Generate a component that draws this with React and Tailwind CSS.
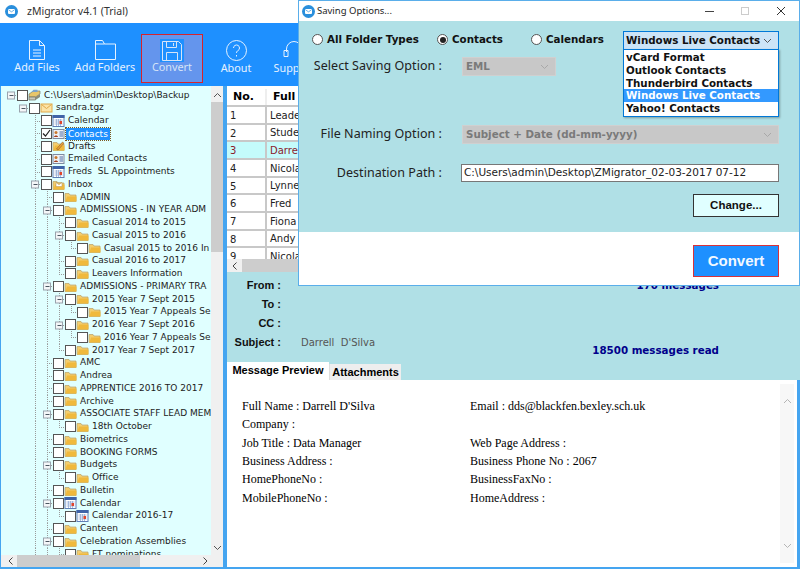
import React from "react"

const treeRows = [
  [0, "C:\\Users\\admin\\Desktop\\Backup", "drive", true],
  [1, "sandra.tgz", "mail", true],
  [2, "Calendar", "cal"],
  [2, "Contacts", "card"],
  [2, "Drafts", "draft"],
  [2, "Emailed Contacts", "card"],
  [2, "Freds  SL Appointments", "cal"],
  [2, "Inbox", "inbox", true],
  [3, "ADMIN", "folder"],
  [3, "ADMISSIONS - IN YEAR ADM", "folder", true],
  [4, "Casual 2014 to 2015", "folder"],
  [4, "Casual 2015 to 2016", "folder", true],
  [5, "Casual 2015 to 2016 In", "folder"],
  [4, "Casual 2016 to 2017", "folder"],
  [4, "Leavers Information", "folder"],
  [3, "ADMISSIONS - PRIMARY TRA", "folder", true],
  [4, "2015 Year 7 Sept 2015", "folder", true],
  [5, "2015 Year 7 Appeals Se", "folder"],
  [4, "2016 Year 7 Sept 2016", "folder", true],
  [5, "2016 Year 7 Appeals Se", "folder"],
  [4, "2017 Year 7 Sept 2017", "folder"],
  [3, "AMC", "folder"],
  [3, "Andrea", "folder"],
  [3, "APPRENTICE 2016 TO 2017", "folder"],
  [3, "Archive", "folder"],
  [3, "ASSOCIATE STAFF LEAD MEM", "folder", true],
  [4, "18th October", "folder"],
  [3, "Biometrics", "folder"],
  [3, "BOOKING FORMS", "folder"],
  [3, "Budgets", "folder", true],
  [4, "Office", "folder"],
  [3, "Bulletin", "folder"],
  [3, "Calendar", "cal", true],
  [4, "Calendar 2016-17", "cal"],
  [3, "Canteen", "folder"],
  [3, "Celebration Assemblies", "folder", true],
  [4, "FT nominations", "folder"],
]

const gridRows = ["Leade", "Stude", "Darre", "Nicola", "Lynne", "Fred", "Fiona", "Andy", "Nicola"]

const previewRows = [
  ["Full Name : Darrell D'Silva", "Email : dds@blackfen.bexley.sch.uk"],
  ["Company :", ""],
  ["Job Title : Data Manager", "Web Page Address :"],
  ["Business Address :", "Business Phone No : 2067"],
  ["HomePhoneNo :", "BusinessFaxNo :"],
  ["MobilePhoneNo :", "HomeAddress :"],
]

// does the line of this level carry on below row i
function lineContinues(i, level) {
  for (let j = i + 1; j < treeRows.length; j++) {
    if (treeRows[j][0] === level) return true
    if (treeRows[j][0] < level) return false
  }
  return level <= 3
}

function TreeLines({ index, depth, open }) {
  const width = 16 + 12 * depth
  const lines = []
  for (let level = 2; level < depth; level++) {
    if (lineContinues(index, level)) lines.push(10 + 12 * level)
  }
  const own = 10 + 12 * depth
  return (
    <svg width={width} height="12.75" viewBox={`0 0 ${width} 12.75`} className="shrink-0">
      {lines.map((x) => (
        <line key={x} x1={x + 0.5} x2={x + 0.5} y1="0" y2="12.75" stroke="#9a9a9a" strokeDasharray="1 1" />
      ))}
      {depth >= 2 && (
        <line x1={own + 0.5} x2={own + 0.5} y1="0" y2={lineContinues(index, depth) ? 12.75 : 6.5} stroke="#9a9a9a" strokeDasharray="1 1" />
      )}
      <line x1={own} x2={width} y1="6.5" y2="6.5" stroke="#9a9a9a" strokeDasharray="1 1" />
      {open && (
        <g>
          <rect x={own - 3.5} y="3" width="7" height="7" fill="#f4f6f8" stroke="#9aa3ad" />
          <line x1={own - 1.5} x2={own + 2.5} y1="6.5" y2="6.5" stroke="#4a5560" />
        </g>
      )}
    </svg>
  )
}

function TreeIcon({ type }) {
  if (type === "cal") {
    return (
      <svg width="13" height="12" viewBox="0 0 12 12" className="shrink-0">
        <rect x="0.5" y="0.5" width="11" height="11" fill="#fff" stroke="#5f7fb5" />
        <rect x="0" y="0" width="12" height="3" fill="#3f63a8" />
        <path d="M2 5h8M2 7h8M2 9h8M4 4v7M6 4v7M8 4v7" stroke="#8aa3d0" strokeWidth="0.7" />
        <rect x="7" y="6" width="2.5" height="3" fill="#e0452c" />
      </svg>
    )
  }
  if (type === "card") {
    return (
      <svg width="13" height="12" viewBox="0 0 12 12" className="shrink-0">
        <rect x="0.5" y="1.5" width="11" height="9" fill="#eef1f6" stroke="#7e8aa0" />
        <circle cx="3.5" cy="4.5" r="1.5" fill="#c9772c" />
        <path d="M1.5 9c0-2 4-2 4 0z" fill="#a33d1c" />
        <path d="M7 4h3.5M7 6h3.5M7 8h3.5" stroke="#4f6fa8" />
      </svg>
    )
  }
  if (type === "mail") {
    return (
      <svg width="13" height="12" viewBox="0 0 12 12" className="shrink-0">
        <rect x="0.5" y="2" width="11" height="8" fill="#fbe3a6" stroke="#e0a94a" />
        <path d="M1 2.5l5 4 5-4" fill="none" stroke="#e0a94a" />
      </svg>
    )
  }
  if (type === "drive") {
    return (
      <svg width="13" height="12" viewBox="0 0 12 12" className="shrink-0">
        <path d="M0.5 8V5L5 2h6.5v3L7 8z" fill="#e8c66a" stroke="#7c7c6a" strokeWidth="0.7" />
        <path d="M0.5 8h6.5v3H0.5z" fill="#c8c8bc" stroke="#6a6a5c" strokeWidth="0.7" />
        <path d="M7 8l4.5-3v3L7 11z" fill="#8c8c78" />
        <path d="M3 3h6V0.8H5z" fill="#7aa3cc" />
      </svg>
    )
  }
  return (
    <svg width="13" height="12" viewBox="0 0 12 12" className="shrink-0">
      <path d="M0.5 10.5V2.5h4l1 1.5h6v6.5z" fill="#f3cd6e" stroke="#b8a06a" strokeWidth="0.7" />
      <path d="M1 10.5l1.5-5h9.5v5z" fill="#f0b93c" />
      {type === "draft" && <path d="M4 9l6-7 1.5 1.2L5.5 10z" fill="#e9a23b" stroke="#7c4d20" strokeWidth="0.5" />}
      {type === "inbox" && <path d="M3.5 3.5h6v4h-6zM3.5 3.5l3 2.2 3-2.2" fill="#fff" stroke="#c0a060" strokeWidth="0.6" />}
    </svg>
  )
}

function Checkbox({ checked }) {
  return (
    <span className="flex h-[11px] w-[11px] shrink-0 items-center justify-center border border-[#555] bg-white">
      {checked && (
        <svg width="9" height="9" viewBox="0 0 9 9">
          <path d="M1 4.5l2.5 2.5L8 1" fill="none" stroke="#222" strokeWidth="1.2" />
        </svg>
      )}
    </span>
  )
}

function TreeRow({ row, index }) {
  const [depth, label, icon, open] = row
  const selected = label === "Contacts"
  return (
    <div className="flex h-[12.75px] items-center whitespace-pre">
      <TreeLines index={index} depth={depth} open={open} />
      <Checkbox checked={selected} />
      <TreeIcon type={icon} />
      <span className={selected ? "ml-px bg-[#1e90ff] px-[2px] leading-[12px] text-white outline-1 outline-dotted outline-[#7a5a20]" : "ml-[3px] text-[#222]"}>
        {label}
      </span>
    </div>
  )
}

function ToolButton({ label, children, active }) {
  return (
    <div className={active ? "flex h-[49px] w-[62px] flex-col items-center border border-[#d8232a] bg-[#6495ed] pt-[4px] text-[#d6e4f7]" : "flex h-[49px] flex-col items-center pt-[6px] text-[#e6f2ff]"}>
      {children}
      <span className={active ? "-mt-[2px] text-[10.8px] leading-[14px] whitespace-nowrap" : "text-[10.8px] leading-[14px] whitespace-nowrap"}>{label}</span>
    </div>
  )
}

function AppIcon() {
  return (
    <svg width="13" height="13" viewBox="0 0 13 13" className="shrink-0">
      <circle cx="6.5" cy="6.5" r="6.5" fill="#2a8fdc" />
      <rect x="3" y="4" width="7" height="5" rx="1" fill="#fff" />
      <path d="M3.5 4.8l3 2 3-2" fill="none" stroke="#2a8fdc" strokeWidth="0.7" />
    </svg>
  )
}

function Chevron({ color }) {
  return (
    <svg width="9" height="6" viewBox="0 0 9 6" className="shrink-0">
      <path d="M1 1l3.5 3.5L8 1" fill="none" stroke={color} />
    </svg>
  )
}

function Radio({ checked, label, width }) {
  return (
    <label className={width + " -mt-[2px] flex items-center gap-[4px] font-bold"}>
      <span className="flex h-[11px] w-[11px] items-center justify-center rounded-full border border-[#555] bg-white">
        {checked && <span className="h-[6px] w-[6px] rounded-full bg-[#222]" />}
      </span>
      {label}
    </label>
  )
}

function FormRow({ label, className, children }) {
  return (
    <div className={"flex items-center " + className}>
      <span className="w-[143px] whitespace-nowrap text-right font-['Noto_Sans',sans-serif] text-[12.5px] tracking-[0.05px] text-[#222]">{label}</span>
      <div className="ml-[20px] flex min-w-0 flex-1">{children}</div>
    </div>
  )
}

function SavingDialog() {
  return (
    <div className="absolute top-0 left-[298px] flex h-[286px] w-[502px] flex-col border border-[#5aaeea] bg-white">
      <div className="flex h-[20px] items-center pl-[3px] font-['Noto_Sans',sans-serif] text-[9.5px] text-[#222]">
        <AppIcon />
        <span className="ml-[2px]">Saving Options...</span>
        <div className="ml-auto flex items-center gap-[27px] pr-[13px]">
          <span className="h-px w-[9px] bg-[#444]" />
          <span className="h-[8px] w-[8px] border border-[#ccc]" />
          <svg width="10" height="10" viewBox="0 0 10 10"><path d="M1 1l8 8M9 1l-8 8" stroke="#333" /></svg>
        </div>
      </div>

      <div className="relative flex h-[211px] flex-col bg-[#b0e0e6] pt-[10px] pr-[20px] font-['DejaVu_Sans',sans-serif] text-[10.3px] text-[#111]">
        <div className="flex h-[19px] items-center pl-[13px]">
          <Radio label="All Folder Types" width="w-[125px]" />
          <Radio checked label="Contacts" width="w-[94px]" />
          <Radio label="Calendars" width="w-[92px]" />
          <div className="flex h-[19px] w-[156px] items-center justify-between border border-[#0078d7] bg-[#cce4f7] pr-[6px] pl-[2px] font-bold whitespace-nowrap">
            Windows Live Contacts
            <Chevron color="#555" />
          </div>
        </div>
        <div className="absolute top-[28px] left-[324px] z-10 flex w-[156px] flex-col border border-[#0078d7] bg-white py-px font-bold shadow-[1px_1px_2px_rgba(0,0,0,0.3)]">
          <span className="h-[12.75px] pl-[2px] leading-[12.75px]">vCard Format</span>
          <span className="h-[12.75px] pl-[2px] leading-[12.75px]">Outlook Contacts</span>
          <span className="h-[12.75px] pl-[2px] leading-[12.75px]">Thunderbird Contacts</span>
          <span className="h-[12.75px] bg-[#3399ff] pl-[2px] leading-[12.75px] text-white">Windows Live Contacts</span>
          <span className="h-[12.75px] pl-[2px] leading-[12.75px]">Yahoo! Contacts</span>
        </div>

        <FormRow label="Select Saving Option :" className="mt-[7px] h-[19px]">
          <div className="flex h-[19px] w-[94px] items-center justify-between border border-[#d0d0d0] bg-[#c8c8c8] pr-[6px] pl-[3px] font-bold text-[#7a7a7a]">
            EML
            <Chevron color="#a8a8a8" />
          </div>
        </FormRow>
        <FormRow label="File Naming Option :" className="mt-[49px] h-[19px]">
          <div className="flex h-[19px] flex-1 items-center justify-between border border-[#d0d0d0] bg-[#c8c8c8] pr-[6px] pl-[3px] font-bold text-[#7a7a7a]">
            Subject + Date (dd-mm-yyyy)
            <Chevron color="#a8a8a8" />
          </div>
        </FormRow>
        <FormRow label="Destination Path :" className="mt-[20px] h-[18px]">
          <div className="-ml-px flex h-[18px] flex-1 items-center border border-[#777] bg-white pl-[2px] text-[10.5px] whitespace-nowrap text-[#222]">
            C:\Users\admin\Desktop\ZMigrator_02-03-2017 07-12
          </div>
        </FormRow>
        <div className="mt-[12px] flex justify-end">
          <button className="h-[23px] w-[86px] border border-[#333] bg-[#e0ffff] font-['Liberation_Sans',sans-serif] text-[11.5px] font-bold text-[#111]">Change...</button>
        </div>
      </div>

      <div className="flex flex-1 justify-end bg-white pt-[13px] pr-[20px]">
        <button className="h-[32px] w-[86px] border border-[#d8323a] bg-[#1e90ff] font-['Liberation_Sans',sans-serif] text-[15px] font-bold text-[#f2f8ff]">Convert</button>
      </div>
    </div>
  )
}

export default function App() {
  return (
    <div className="relative flex h-[569px] w-[800px] flex-col overflow-hidden bg-[#45a5f0] font-['DejaVu_Sans',sans-serif]">
      <div className="flex h-[23px] items-center bg-white pl-[5px] font-['Noto_Sans',sans-serif] text-[10.5px] text-[#333]">
        <AppIcon />
        <span className="ml-[9px]">zMigrator v4.1 (Trial)</span>
      </div>

      <div className="flex h-[63px] items-start bg-[#1e90ff] pt-[11px] font-['Noto_Sans',sans-serif]">
        <div className="ml-[14px] flex w-[46px] justify-center">
          <ToolButton label="Add Files">
            <svg width="18" height="20" viewBox="0 0 18 20" fill="none" stroke="currentColor" className="shrink-0">
              <path d="M1.5.5h10l5 5v14h-15zM11.5.5v5h5M5 10h8M5 13h8M5 16h8" />
            </svg>
          </ToolButton>
        </div>
        <div className="ml-[15px] flex w-[60px] justify-center">
          <ToolButton label="Add Folders">
            <svg width="22" height="20" viewBox="0 0 22 20" fill="none" stroke="currentColor" className="shrink-0">
              <path d="M1.5 19.5V.5h7l2 3.5h11v15.5zM1.5 4h9" />
            </svg>
          </ToolButton>
        </div>
        <div className="ml-[6px]">
          <ToolButton label="Convert" active>
            <span className="flex h-[23px] w-[24px] shrink-0 items-center justify-center bg-[#1e90ff]">
              <svg width="20" height="20" viewBox="0 0 20 20" fill="none" stroke="currentColor">
                <path d="M.5.5h16l3 3v16H.5zM4.5.5v6h10v-6M4.5 19.5v-8h11v8M11.5 2v3" />
              </svg>
            </span>
          </ToolButton>
        </div>
        <div className="ml-[18px] flex w-[30px] justify-center">
          <ToolButton label="About">
            <svg width="21" height="21" viewBox="0 0 21 21" fill="none" stroke="currentColor" className="shrink-0">
              <circle cx="10.5" cy="10.5" r="10" />
              <path d="M7.5 8a3 3 0 1 1 4.5 2.6c-1 .6-1.5 1.1-1.5 2.4M10.5 15v1.5" />
            </svg>
          </ToolButton>
        </div>
        <div className="ml-[28px] w-[30px]">
          <ToolButton label="Support">
            <svg width="22" height="21" viewBox="0 0 22 21" fill="none" stroke="currentColor" className="shrink-0">
              <path d="M3.5 12V9a7.5 7.5 0 0 1 15 0v3M1 10.5h4v6H1zM17 10.5h4v6h-4z" />
            </svg>
          </ToolButton>
        </div>
      </div>

      <div className="flex min-h-0 flex-1 pb-[2px]">
        <div className="ml-px flex w-[222px] shrink-0 flex-col bg-[#f0f0f0]">
          <div className="flex min-h-0 flex-1">
            <div className="flex-1 overflow-hidden bg-[#e0ffff] pt-[3px] text-[9px] tracking-[0.02px]">
              {treeRows.map((row, i) => (
                <TreeRow key={i} row={row} index={i} />
              ))}
            </div>
            <div className="flex w-[12px] shrink-0 flex-col items-center bg-[#f0f0f0]">
              <span className="mt-[6px] rotate-180"><Chevron color="#555" /></span>
              <div className="mt-[4px] h-[150px] w-full bg-[#cdcdcd]" />
              <span className="mt-auto mb-[4px]"><Chevron color="#555" /></span>
            </div>
          </div>
          <div className="flex h-[12px] shrink-0 items-center bg-[#f0f0f0]">
            <span className="ml-[5px] rotate-90"><Chevron color="#444" /></span>
            <div className="ml-[2px] h-full w-[123px] bg-[#cdcdcd]" />
            <span className="ml-[61px] -rotate-90"><Chevron color="#444" /></span>
          </div>
        </div>

        <div className="ml-[4px] flex min-w-0 flex-1 flex-col">
          <div className="flex h-[186px] shrink-0 flex-col bg-white">
            <div className="min-h-0 flex-1 overflow-hidden pt-[3px] font-['DejaVu_Sans',sans-serif] text-[10px] text-[#222]">
              <div className="flex h-[18px] items-center border-b-2 border-[#c8c8c8] text-[11px] font-bold text-black">
                <span className="w-[40px] border-r-2 border-[#eee] pl-[6px]">No.</span>
                <span className="pl-[6px]">Full</span>
              </div>
              {gridRows.map((name, i) => (
                <div key={i} className={i === 2 ? "flex h-[17.67px] items-center border-b-2 border-[#c8c8c8] bg-[#c4fbfb] text-[#8b1a2b]" : "flex h-[17.67px] items-center border-b-2 border-[#c8c8c8]"}>
                  <span className="w-[40px] self-stretch border-r-2 border-[#c8c8c8] pl-[3px] leading-[18px]">{i + 1}</span>
                  <span className="pt-px pl-[3px]">{name}</span>
                </div>
              ))}
            </div>
            <div className="flex h-[13px] shrink-0 items-center bg-[#f0f0f0]">
              <span className="ml-[3px] rotate-90"><Chevron color="#444" /></span>
              <div className="ml-[3px] h-full w-[420px] bg-[#cdcdcd]" />
            </div>
          </div>

          <div className="flex h-[90px] shrink-0 justify-between bg-[#b0e0e6] pt-[4px] pr-[81px] font-['Liberation_Sans',sans-serif] text-[11px]">
            <div className="flex flex-col">
              {["From :", "To :", "CC :", "Subject :"].map((label) => (
                <div key={label} className="flex h-[19px] items-center">
                  <span className="w-[54px] text-right font-bold text-[#111]">{label}</span>
                  {label === "Subject :" && <span className="ml-[20px] font-['DejaVu_Sans',sans-serif] text-[10px] whitespace-pre text-[#555]">Darrell  D'Silva</span>}
                </div>
              ))}
            </div>
            <div className="flex flex-col items-end font-['DejaVu_Sans',sans-serif] text-[10.3px] font-bold text-[#00008b]">
              <span className="mt-[2px]">170 messages</span>
              <span className="mt-[50px]">18500 messages read</span>
            </div>
          </div>

          <div className="flex h-[18px] shrink-0 items-end bg-[#b0e0e6] font-['Liberation_Sans',sans-serif] text-[11px] font-bold text-black">
            <span className="flex h-[18px] w-[102px] items-center justify-center bg-white pb-[2px]">Message Preview</span>
            <span className="flex h-[16px] w-[72px] items-center justify-center border-l border-[#ddd] bg-[#eee]">Attachments</span>
          </div>

          <div className="mr-[3px] flex min-h-0 flex-1 bg-white pt-[4px] font-['Liberation_Serif',serif] text-[12px] text-black">
            <div className="flex-1 pt-[13px] pl-[15px]">
              {previewRows.map(([left, right], i) => (
                <div key={i} className="grid h-[18.3px] grid-cols-[228px_1fr] items-center">
                  <span>{left}</span>
                  <span>{right}</span>
                </div>
              ))}
            </div>
            <div className="mr-[3px] mb-[4px] flex w-[14px] flex-col items-center justify-between bg-[#f7f7f7] py-[14px]">
              <span className="rotate-180"><Chevron color="#b5b5b5" /></span>
              <Chevron color="#b5b5b5" />
            </div>
          </div>
        </div>
      </div>

      <SavingDialog />
    </div>
  )
}
